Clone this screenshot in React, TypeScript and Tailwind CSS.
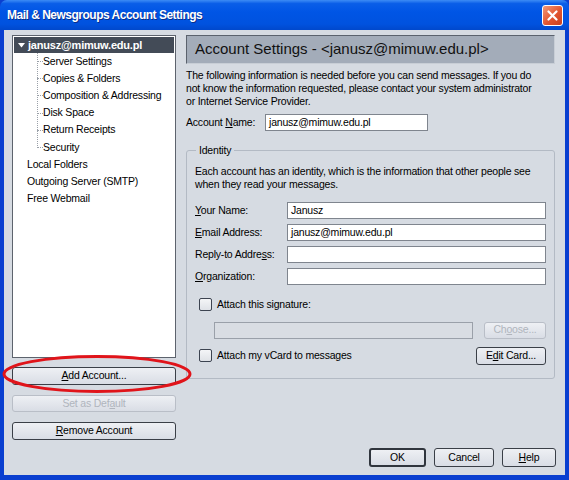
import React from "react";

const font = { fontFamily: '"Liberation Sans", Arial, sans-serif' };

function Btn({ children, className = "", disabled = false, def = false }: { children: React.ReactNode; className?: string; disabled?: boolean; def?: boolean }) {
  return (
    <div
      className={
        "flex items-center justify-center rounded-[3px] bg-[linear-gradient(#eef0f4,#d9dde5)] " +
        (disabled
          ? "border border-[#b9bec7] text-[#b0b5bd] "
          : def
          ? "border-2 border-[#30353d] text-black "
          : "border border-[#3a3f47] text-black ") +
        className
      }
    >
      {children}
    </div>
  );
}

function Input({ value = "", className = "", disabled = false }: { value?: string; className?: string; disabled?: boolean }) {
  return (
    <div
      className={
        "h-[17px] border flex items-center px-[3px] " +
        (disabled ? "bg-[#d9dde3] border-[#9aa0a9]" : "bg-white border-[#7f858e]") +
        " " +
        className
      }
    >
      {value}
    </div>
  );
}

function Check({ label }: { label: string }) {
  return (
    <div className="flex items-center gap-[5px]">
      <div className="w-[13px] h-[13px] border border-[#3c4350] rounded-[2px] bg-[linear-gradient(#f4f5f7,#dfe2e7)]" />
      <span>{label}</span>
    </div>
  );
}

function Row({ label, value }: { label: React.ReactNode; value?: string }) {
  return (
    <div className="flex items-center h-[17px]">
      <div className="w-[92px]">{label}</div>
      <Input value={value} className="w-[259px]" />
    </div>
  );
}

export default function App() {
  const children = ["Server Settings", "Copies & Folders", "Composition & Addressing", "Disk Space", "Return Receipts", "Security"];
  return (
    <div className="w-[569px] h-[480px] relative overflow-hidden bg-[#0a3fd0]" style={font}>
      {/* Title bar */}
      <div className="h-[30px] flex items-center justify-between pl-[7px] pr-[6px] rounded-t-[7px] bg-[linear-gradient(#3d8cf5_0%,#0a5ee8_12%,#0055e5_40%,#0052df_80%,#0048cc_100%)]">
        <span className="text-white font-bold text-[12px] tracking-[-0.5px] [text-shadow:1px_1px_0_#0a2f8a]">Mail &amp; Newsgroups Account Settings</span>
        <div className="w-[21px] h-[21px] rounded-[3px] border border-white bg-[linear-gradient(135deg,#f29a7a,#e2552f_55%,#c8401f)] flex items-center justify-center">
          <svg width="11" height="11" viewBox="0 0 11 11">
            <path d="M1.5 1.5 L9.5 9.5 M9.5 1.5 L1.5 9.5" stroke="white" strokeWidth="2.2" strokeLinecap="round" />
          </svg>
        </div>
      </div>
      {/* Body */}
      <div className="absolute left-[4px] right-[4px] top-[30px] bottom-[5px] bg-[#d6dbe2] text-black text-[10.5px] tracking-[-0.2px]">
        <div className="flex pt-[5px] pl-[8px] gap-[10px]">
          {/* Left column */}
          <div className="w-[164px] flex flex-col">
            <div className="h-[323px] bg-white border border-[#5d636d] pt-[1px] px-[1px]">
              <div className="h-[16px] bg-[#434b57] text-white font-bold flex items-center pl-[4px] gap-[3px]">
                <svg width="7" height="5" viewBox="0 0 7 5"><path d="M0 0 H7 L3.5 4.5 Z" fill="white" /></svg>
                <span className="text-[11px]">janusz@mimuw.edu.pl</span>
              </div>
              <div className="relative">
                <div className="absolute left-[23px] top-0 h-[95px] border-l border-dotted border-[#9aa0a8]" />
                {children.map((c) => (
                  <div key={c} className="h-[17.2px] flex items-center pl-[23px]">
                    <div className="w-[6px] border-t border-dotted border-[#9aa0a8]" />
                    <span>{c}</span>
                  </div>
                ))}
              </div>
              {["Local Folders", "Outgoing Server (SMTP)", "Free Webmail"].map((c) => (
                <div key={c} className="h-[17.2px] flex items-center pl-[13px]">{c}</div>
              ))}
            </div>
            <Btn className="mt-[9px] h-[18px]"><span><u>A</u>dd Account...</span></Btn>
            <Btn disabled className="mt-[10px] h-[17px]"><span>Set as Def<u>a</u>ult</span></Btn>
            <Btn className="mt-[10px] h-[18px]"><span><u>R</u>emove Account</span></Btn>
          </div>
          {/* Right column */}
          <div className="w-[369px] flex flex-col">
            <div className="h-[29px] bg-[#a3acb9] border border-[#5b626d] border-b-[#c8ced6] border-r-[#c8ced6] flex items-center pl-[8px] text-[15px] tracking-normal text-[#111]">
              Account Settings - &lt;janusz@mimuw.edu.pl&gt;
            </div>
            <p className="mt-[5px] leading-[13px] whitespace-nowrap">
              The following information is needed before you can send messages. If you do
              <br />
              not know the information requested, please contact your system administrator
              <br />
              or Internet Service Provider.
            </p>
            <div className="mt-[6px] flex items-center h-[17px]">
              <div className="w-[79px]">Account <u>N</u>ame:</div>
              <Input value="janusz@mimuw.edu.pl" className="w-[163px]" />
            </div>
            <div className="mt-[19px] h-[229px] border border-[#b3bac4] rounded-[3px] relative pt-[14px] pl-[8px] pr-[8px]">
              <div className="absolute -top-[8px] left-[9px] px-[3px] bg-[#d6dbe2]">Identity</div>
              <p className="leading-[13px] whitespace-nowrap">
                Each account has an identity, which is the information that other people see
                <br />
                when they read your messages.
              </p>
              <div className="mt-[11px] flex flex-col gap-[5px]">
                <Row label={<span><u>Y</u>our Name:</span>} value="Janusz" />
                <Row label={<span><u>E</u>mail Address:</span>} value="janusz@mimuw.edu.pl" />
                <Row label={<span>Reply-to Addre<u>s</u>s:</span>} />
                <Row label={<span><u>O</u>rganization:</span>} />
              </div>
              <div className="mt-[12px] pl-[4px]">
                <Check label="Attach this signature:" />
              </div>
              <div className="mt-[9px] pl-[19px] flex items-center gap-[11px]">
                <Input disabled className="w-[259px]" />
                <Btn disabled className="w-[62px] h-[17px]"><span>Ch<u>o</u>ose...</span></Btn>
              </div>
              <div className="mt-[8px] pl-[4px] flex items-center justify-between">
                <Check label="Attach my vCard to messages" />
                <Btn className="w-[70px] h-[18px]"><span>E<u>d</u>it Card...</span></Btn>
              </div>
            </div>
          </div>
        </div>
        <div className="absolute right-[9px] bottom-[8px] flex gap-[8px]">
          <Btn def className="w-[57px] h-[19px]">OK</Btn>
          <Btn className="w-[60px] h-[19px]">Cancel</Btn>
          <Btn className="w-[54px] h-[19px]"><span><u>H</u>elp</span></Btn>
        </div>
      </div>
      {/* Red ellipse annotation */}
      <svg className="absolute left-0 top-0 pointer-events-none" width="569" height="480">
        <ellipse cx="97" cy="374" rx="93" ry="17.5" fill="none" stroke="#e0141a" strokeWidth="3" />
      </svg>
    </div>
  );
}
